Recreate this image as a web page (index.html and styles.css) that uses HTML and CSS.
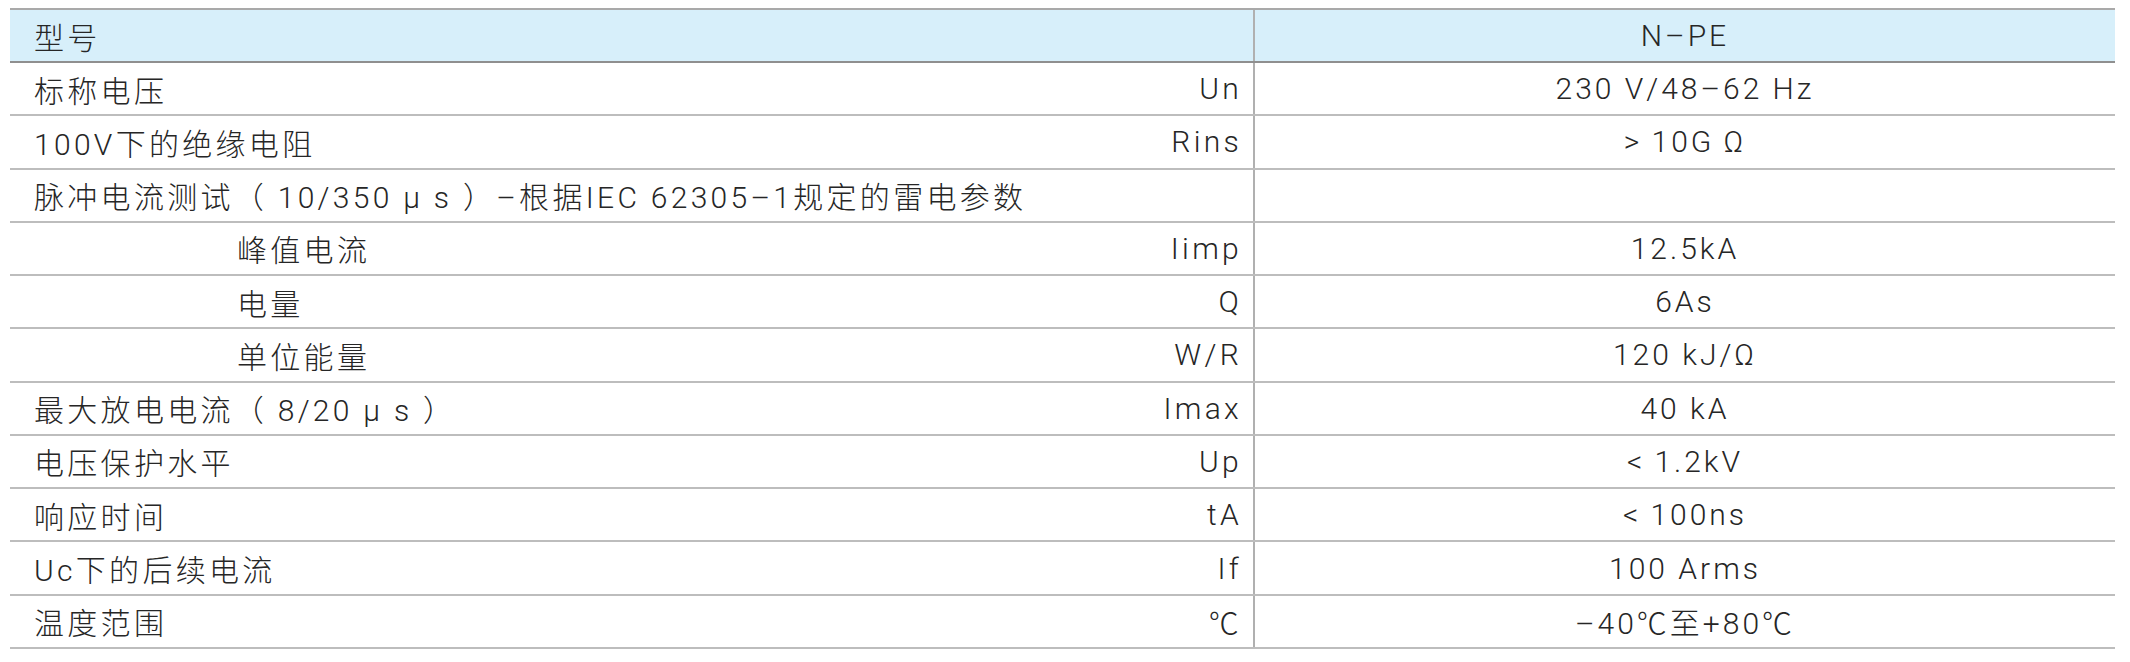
FILE: index.html
```html
<!DOCTYPE html>
<html lang="zh">
<head>
<meta charset="utf-8">
<title>N-PE 技术参数</title>
<link rel="stylesheet" href="styles.css">
</head>
<body>
<div class="spec">
  <div class="row head">
    <div class="left"><span class="name">型号</span><span class="sym"></span></div>
    <div class="val">N–PE</div>
  </div>
  <div class="row">
    <div class="left"><span class="name">标称电压</span><span class="sym">Un</span></div>
    <div class="val">230 V/48–62 Hz</div>
  </div>
  <div class="row">
    <div class="left"><span class="name">100V下的绝缘电阻</span><span class="sym">Rins</span></div>
    <div class="val">&gt;&thinsp;10G&thinsp;Ω</div>
  </div>
  <div class="row">
    <div class="left"><span class="name">脉冲电流测试（ 10/350 μ s ）–根据IEC 62305–1规定的雷电参数</span><span class="sym"></span></div>
    <div class="val"></div>
  </div>
  <div class="row sub">
    <div class="left"><span class="name">峰值电流</span><span class="sym">Iimp</span></div>
    <div class="val">12.5kA</div>
  </div>
  <div class="row sub">
    <div class="left"><span class="name">电量</span><span class="sym">Q</span></div>
    <div class="val">6As</div>
  </div>
  <div class="row sub">
    <div class="left"><span class="name">单位能量</span><span class="sym">W/R</span></div>
    <div class="val">120 kJ/Ω</div>
  </div>
  <div class="row">
    <div class="left"><span class="name">最大放电电流（ 8/20 μ s ）</span><span class="sym">Imax</span></div>
    <div class="val">40 kA</div>
  </div>
  <div class="row">
    <div class="left"><span class="name">电压保护水平</span><span class="sym">Up</span></div>
    <div class="val">&lt;&thinsp;1.2kV</div>
  </div>
  <div class="row">
    <div class="left"><span class="name">响应时间</span><span class="sym">tA</span></div>
    <div class="val">&lt;&thinsp;100ns</div>
  </div>
  <div class="row">
    <div class="left"><span class="name">Uc下的后续电流</span><span class="sym">If</span></div>
    <div class="val">100 Arms</div>
  </div>
  <div class="row">
    <div class="left"><span class="name">温度范围</span><span class="sym">℃</span></div>
    <div class="val">–40℃至+80℃</div>
  </div>
</div>
</body>
</html>
```
FILE: styles.css
```css
html, body {
  margin: 0;
  background: #ffffff;
}
body {
  padding: 8px 0 0 10px;
  font-family: Roboto, "Liberation Sans", "Noto Sans CJK SC", sans-serif;
  font-size: 30px;
  font-weight: 300;
  letter-spacing: 3px;
  color: #262626;
}
.spec {
  width: 2105px;
  display: flex;
  flex-direction: column;
}
.row {
  display: grid;
  grid-template-columns: 1243px 862px;
  height: 53.27px;
  box-sizing: border-box;
  border-bottom: 2px solid #bdbdbd;
}
.row.head {
  height: 55px;
  background: #d7effa;
  border-top: 2px solid #a9a9a9;
  border-bottom: 2px solid #8f8f8f;
}
.left {
  display: flex;
  align-items: center;
  justify-content: space-between;
  padding: 0 11px 0 24px;
  white-space: nowrap;
  letter-spacing: 3.3px;
}
.row.sub .left {
  padding-left: 227px;
}
.val {
  display: flex;
  align-items: center;
  justify-content: center;
  border-left: 2px solid #b0b0b0;
  white-space: nowrap;
}
```
